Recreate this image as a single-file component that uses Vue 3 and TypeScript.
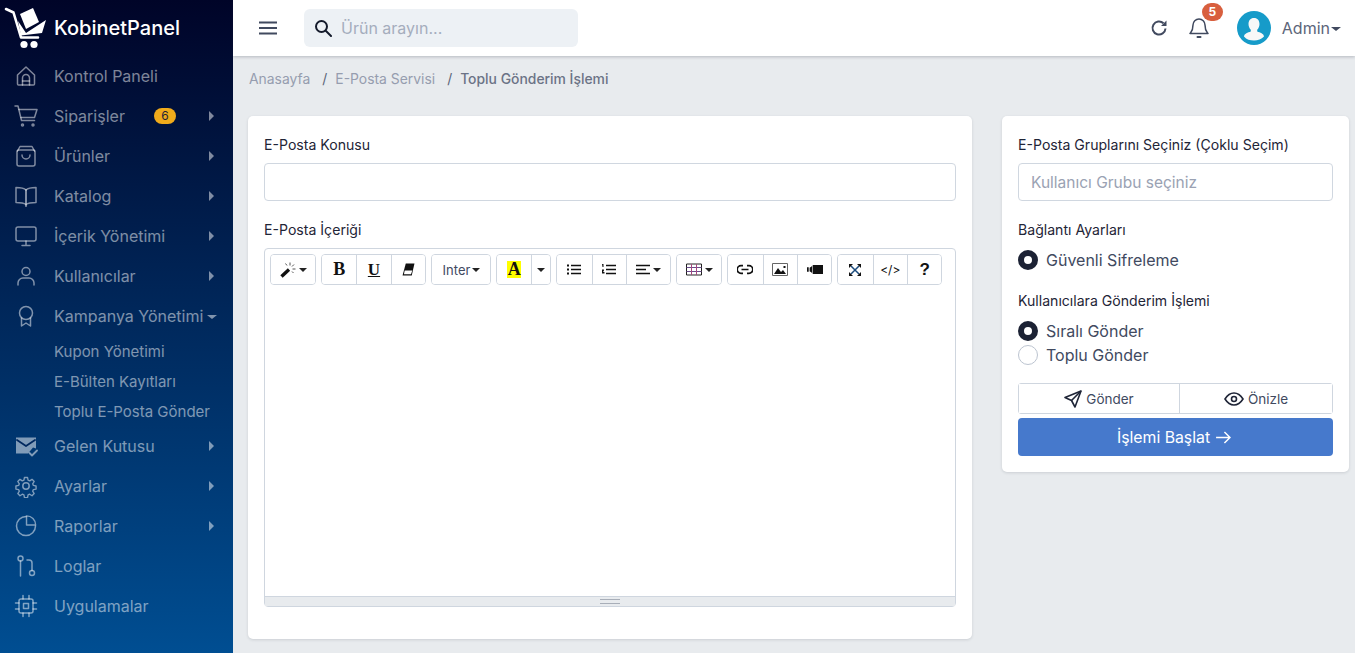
<script setup lang="ts">
interface MenuItem {
  label: string;
  icon: string;
  arrow?: boolean;
  badge?: string;
  open?: boolean;
  children?: string[];
}

const menu: MenuItem[] = [
  { label: "Kontrol Paneli", icon: "home" },
  { label: "Siparişler", icon: "cart", arrow: true, badge: "6" },
  { label: "Ürünler", icon: "bag", arrow: true },
  { label: "Katalog", icon: "book", arrow: true },
  { label: "İçerik Yönetimi", icon: "monitor", arrow: true },
  { label: "Kullanıcılar", icon: "user", arrow: true },
  {
    label: "Kampanya Yönetimi",
    icon: "award",
    open: true,
    children: ["Kupon Yönetimi", "E-Bülten Kayıtları", "Toplu E-Posta Gönder"],
  },
  { label: "Gelen Kutusu", icon: "mail", arrow: true },
  { label: "Ayarlar", icon: "gear", arrow: true },
  { label: "Raporlar", icon: "pie", arrow: true },
  { label: "Loglar", icon: "git" },
  { label: "Uygulamalar", icon: "cpu" },
];
</script>

<template>
  <div class="app">
    <aside class="sidebar">
      <div class="brand">
        <svg class="logo" viewBox="4 4 46 46" fill="#fff">
          <path d="M6 9 13.500 12.500 21 37.500H38" fill="none" stroke="#fff" stroke-width="2.600" stroke-linecap="round" stroke-linejoin="round" />
          <path d="M20 14 33 8 39 22 26 29z" />
          <path d="M18 21 26 33 46 20 42 33 21 35.500z" />
          <circle cx="24" cy="44.500" r="3.600" />
          <circle cx="34" cy="44.500" r="3.600" />
        </svg>
        <span class="brand-name">KobinetPanel</span>
      </div>
      <nav class="menu">
        <template v-for="item in menu" :key="item.label">
          <div class="menu-item">
            <svg class="menu-icon" viewBox="0 0 24 24" fill="none" stroke="currentColor" stroke-width="1.500" stroke-linecap="round" stroke-linejoin="round">
              <template v-if="item.icon === 'home'">
                <path d="M3.500 11 12 3l8.500 8v9a1 1 0 0 1-1 1h-15a1 1 0 0 1-1-1z" />
                <path d="M8.500 21v-7a3.500 3.500 0 0 1 7 0v7" />
                <path d="M8.500 17h7" />
              </template>
              <template v-else-if="item.icon === 'cart'">
                <path d="M1 2h3l3.500 14.500h13" />
                <path d="M5 5.500h18l-2.500 8H7" />
                <circle cx="8.500" cy="21" r="1" />
                <circle cx="19" cy="21" r="1" />
              </template>
              <template v-else-if="item.icon === 'bag'">
                <rect x="3" y="6" width="18" height="16" rx="2" />
                <path d="M3.500 7 6 2.500h12L20.500 7" />
                <path d="M8 11a4 4 0 0 0 8 0" />
              </template>
              <template v-else-if="item.icon === 'book'">
                <path d="M12 6C10 4 6 3.500 2 3.500v15c4 0 8 .5 10 2 2-1.500 6-2 10-2v-15c-4 0-8 .5-10 2.500z" />
                <path d="M12 6v16" stroke-width="2" />
              </template>
              <template v-else-if="item.icon === 'monitor'">
                <rect x="2" y="3" width="20" height="14" rx="2" />
                <path d="M12 17v4M8 21.500h8" />
              </template>
              <template v-else-if="item.icon === 'user'">
                <circle cx="12" cy="7.500" r="4" />
                <path d="M4 21v-2a5 5 0 0 1 5-5h6a5 5 0 0 1 5 5v2" />
              </template>
              <template v-else-if="item.icon === 'award'">
                <circle cx="12" cy="9" r="6.500" />
                <path d="M7.500 14v8l4.500-3 4.500 3v-8" />
              </template>
              <template v-else-if="item.icon === 'mail'">
                <path d="M2 3.500h20v11l-3-1-5 6H2z" fill="currentColor" stroke="none" />
                <path d="m3 6 9 6 9-6" stroke="#00285f" stroke-width="1.800" />
                <path d="m15.500 19 2.500 2.500 5-5" stroke-width="1.800" />
              </template>
              <template v-else-if="item.icon === 'gear'">
                <path d="M10.300 2.500h3.400l.6 3 1.800.8 2.600-1.700 2.400 2.400-1.700 2.600.8 1.800 3 .6v3.400l-3 .6-.8 1.800 1.700 2.600-2.400 2.400-2.600-1.700-1.800.8-.6 3h-3.400l-.6-3-1.800-.8-2.600 1.700-2.400-2.400 1.700-2.600-.8-1.800-3-.6v-3.400l3-.6.8-1.800-1.700-2.600 2.400-2.400 2.600 1.700 1.800-.8z" transform="translate(1.200 1.200) scale(.9)" />
                <circle cx="12" cy="12" r="3.200" />
              </template>
              <template v-else-if="item.icon === 'pie'">
                <path d="M12 2.500a9.500 9.500 0 1 0 9.500 9.500" />
                <path d="M12 2.500V12h9.500A9.500 9.500 0 0 0 12 2.500z" transform="translate(1 -0.500) scale(.96)" />
              </template>
              <template v-else-if="item.icon === 'git'">
                <circle cx="6.500" cy="4.500" r="2.500" />
                <path d="M6.500 7v15" />
                <circle cx="18" cy="19" r="2.500" />
                <path d="M18 16.500V9a3 3 0 0 0-3-3h-2" />
              </template>
              <template v-else>
                <rect x="5" y="5" width="14" height="14" rx="2" />
                <rect x="9.500" y="9.500" width="5" height="5" />
                <path d="M9 1.500V5M15 1.500V5M9 19v3.500M15 19v3.500M1.500 9H5M1.500 15H5M19 9h3.500M19 15h3.500" />
              </template>
            </svg>
            <span class="menu-label">{{ item.label }}</span>
            <span v-if="item.badge" class="menu-badge">{{ item.badge }}</span>
            <span v-if="item.arrow" class="arrow-right"></span>
            <span v-if="item.open" class="arrow-down"></span>
          </div>
          <div v-for="child in item.children" :key="child" class="sub-item">{{ child }}</div>
        </template>
      </nav>
    </aside>

    <div class="main">
      <header class="topbar">
        <svg class="burger" viewBox="0 0 18 14" fill="none" stroke="#414a5f" stroke-width="2">
          <path d="M0 1.500h18M0 7h18M0 12.500h18" />
        </svg>
        <div class="search">
          <svg class="search-icon" viewBox="0 0 18 18" fill="none" stroke="#141a2b" stroke-width="2" stroke-linecap="round">
            <circle cx="7.500" cy="7.500" r="5.500" />
            <path d="m12 12 5 5" />
          </svg>
          <span class="search-text">Ürün arayın...</span>
        </div>
        <div class="top-right">
          <svg class="refresh" viewBox="0 0 18 18" fill="none" stroke="#414a5f" stroke-width="2">
            <path d="M15.500 9.500A6.500 6.500 0 1 1 13.500 4.300" />
            <path d="M16.500 1.500v5.500H11z" fill="#414a5f" stroke="none" />
          </svg>
          <div class="bell-wrap">
            <svg class="bell" viewBox="0 0 20 22" fill="none" stroke="#414a5f" stroke-width="1.500" stroke-linecap="round" stroke-linejoin="round">
              <path d="M10 2a6 6 0 0 0-6 6c0 6-2 7-3 8.500h18C18 15 16 14 16 8a6 6 0 0 0-6-6z" />
              <path d="M8.500 20h3" stroke-width="2" />
            </svg>
            <span class="bell-badge">5</span>
          </div>
          <div class="avatar">
            <svg viewBox="0 0 34 34">
              <path d="M17 7c-3.600 0-5.500 2.600-5.500 6 0 2.500 1 4.500 2.300 5.700v1.800c-3 1.200-6.500 2-6.800 5C9.500 28.500 13 29.500 17 29.500s7.500-1 10-3.900c-.3-3-3.800-3.800-6.800-5v-1.800c1.300-1.200 2.300-3.200 2.300-5.700 0-3.400-1.900-6-5.500-6z" fill="#f8f8f8" />
            </svg>
          </div>
          <span class="admin">Admin</span>
          <span class="caret admin-caret"></span>
        </div>
      </header>

      <div class="crumbs">
        <span>Anasayfa</span>
        <span class="sep">/</span>
        <span>E-Posta Servisi</span>
        <span class="sep">/</span>
        <span class="current">Toplu Gönderim İşlemi</span>
      </div>

      <div class="content">
        <section class="card left-card">
          <label class="field-label">E-Posta Konusu</label>
          <div class="input"></div>
          <label class="field-label second">E-Posta İçeriği</label>
          <div class="editor">
            <div class="toolbar">
              <div class="group">
                <button class="tool w46">
                  <svg class="ico wand" viewBox="0 0 16 16">
                    <path d="M1.500 14.500 9 7.500" stroke="#111" stroke-width="3.400" fill="none" />
                    <path d="M10 .5v3M14 2.500l-2 2M15.500 7h-3M13.500 11l-1.500-1.500M5.500 1.500l1.500 2" stroke="#555" stroke-width="1" fill="none" />
                  </svg>
                  <span class="caret small"></span>
                </button>
              </div>
              <div class="group">
                <button class="tool w35 serif-b">B</button>
                <button class="tool w35 serif-u">U</button>
                <button class="tool w35">
                  <svg class="ico eraser" viewBox="0 0 12 12"><path d="M3.500 .5H11.500L9 11.500H.5z" fill="#111" /><path d="M2.500 7h7L8.300 10.300H1.800z" fill="#fff" /></svg>
                </button>
              </div>
              <div class="group">
                <button class="tool w60 font-btn">Inter<span class="caret small tight"></span></button>
              </div>
              <div class="group">
                <button class="tool w35"><span class="color-a">A</span></button>
                <button class="tool w20"><span class="caret small flush"></span></button>
              </div>
              <div class="group">
                <button class="tool w35">
                  <svg class="ico" viewBox="0 0 14 12" fill="#111"><path d="M0 1h2v2H0zM0 5h2v2H0zM0 9h2v2H0zM4 1.300h10v1.400H4zM4 5.300h10v1.400H4zM4 9.300h10v1.400H4z" /></svg>
                </button>
                <button class="tool w35">
                  <svg class="ico" viewBox="0 0 14 12" fill="#111"><path d="M0 .5h1.500v3H.5zM0 6h2v1l-1 1.500h1.500V10H0zM4 1.300h10v1.400H4zM4 5.300h10v1.400H4zM4 9.300h10v1.400H4z" /></svg>
                </button>
                <button class="tool w45">
                  <svg class="ico" viewBox="0 0 14 12" fill="#111"><path d="M0 1.300h14v1.400H0zM0 5.300h10v1.400H0zM0 9.300h14v1.400H0z" /></svg>
                  <span class="caret small"></span>
                </button>
              </div>
              <div class="group">
                <button class="tool w46">
                  <svg class="ico table" viewBox="0 0 16 12" fill="none" stroke="#222"><path d="M.5.500h15v11H.5z" /><path d="M.5 4h15M.5 8h15" stroke="#6a4b8c" /><path d="M5.500.500v11M10.500.500v11" stroke="#a5487c" /></svg>
                  <span class="caret small"></span>
                </button>
              </div>
              <div class="group">
                <button class="tool w35">
                  <svg class="ico wide" viewBox="0 0 16 10" fill="none" stroke="#111" stroke-width="1.700"><path d="M6 1.200H4a3.800 3.800 0 0 0 0 7.600h2M10 1.200h2a3.800 3.800 0 0 1 0 7.600h-2M4.500 5h7" /></svg>
                </button>
                <button class="tool w35">
                  <svg class="ico wide" viewBox="0 0 16 13"><path d="M.5.500h15v12H.5z" fill="#fff" stroke="#666" /><path d="M2 11 6 5l3 4 2-2 3 4z" fill="#111" /><path d="M11.500 3h2v2h-2z" fill="#111" /></svg>
                </button>
                <button class="tool w35">
                  <svg class="ico wide" viewBox="0 0 14 9" fill="#111"><path d="M5 .5h9v8H5zM0 2.500h1.500v4H0zM2.300 3 4.500 1.500v6L2.300 6z" /></svg>
                </button>
              </div>
              <div class="group">
                <button class="tool w35">
                  <svg class="ico exp" viewBox="0 0 12 12" fill="none" stroke="#1a4a7c" stroke-width="1.500"><path d="m2 2 8 8M10 2l-8 8" /><path d="M0 0h4L0 4zM12 0H8l4 4zM0 12h4L0 8zM12 12H8l4-4z" fill="#111" stroke="none" /></svg>
                </button>
                <button class="tool w35 code">&lt;/&gt;</button>
                <button class="tool w35 help">?</button>
              </div>
            </div>
            <div class="editor-body"></div>
            <div class="statusbar"><span class="grip"></span></div>
          </div>
        </section>

        <section class="card right-card">
          <label class="field-label">E-Posta Gruplarını Seçiniz (Çoklu Seçim)</label>
          <div class="input placeholder">Kullanıcı Grubu seçiniz</div>
          <label class="field-label second">Bağlantı Ayarları</label>
          <div class="radio-row"><span class="radio on"></span>Güvenli Sifreleme</div>
          <label class="field-label third">Kullanıcılara Gönderim İşlemi</label>
          <div class="radio-row first-radio"><span class="radio on"></span>Sıralı Gönder</div>
          <div class="radio-row"><span class="radio"></span>Toplu Gönder</div>
          <div class="btn-group">
            <button class="outline send">
              <svg viewBox="0 0 18 18" fill="none" stroke="#1f2537" stroke-width="1.600" stroke-linejoin="round"><path d="M17 1 1 7.500l6.500 3L11 17z" /><path d="M17 1 7.500 10.500" /></svg>
              Gönder
            </button>
            <button class="outline preview">
              <svg viewBox="0 0 20 14" fill="none" stroke="#1f2537" stroke-width="1.600"><path d="M1 7c2.500-4 5.500-6 9-6s6.500 2 9 6c-2.500 4-5.500 6-9 6s-6.500-2-9-6z" /><circle cx="10" cy="7" r="2.500" /></svg>
              Önizle
            </button>
          </div>
          <button class="start">
            İşlemi Başlat
            <svg viewBox="0 0 16 14" fill="none" stroke="#fff" stroke-width="1.600"><path d="M0 7h15M9 1l6 6-6 6" /></svg>
          </button>
        </section>
      </div>
    </div>
  </div>
</template>

<style>
html,
body {
  margin: 0;
  overflow: hidden;
}
</style>

<style scoped>
.app {
  display: flex;
  width: 1355px;
  height: 653px;
  overflow: hidden;
  font-family: Inter, "Noto Sans", sans-serif;
  background: #e8ebee;
  color: #1f2537;
}

.sidebar {
  width: 233px;
  flex-shrink: 0;
  background: linear-gradient(180deg, #000428 0%, #004e92 100%);
}

.brand {
  display: flex;
  align-items: center;
  height: 56px;
  padding-left: 4px;
}

.logo {
  width: 46px;
  height: 46px;
  margin-top: -2px;
}

.brand-name {
  margin-left: 4px;
  color: #fff;
  font-size: 20px;
  font-weight: 500;
}

.menu-item {
  position: relative;
  display: flex;
  align-items: center;
  height: 40px;
  padding-left: 14px;
  color: rgba(255, 255, 255, 0.5);
  font-size: 16px;
}

.menu-icon {
  width: 24px;
  height: 24px;
  margin-right: 16px;
  flex-shrink: 0;
}

.menu-badge {
  position: absolute;
  left: 154px;
  top: 12px;
  width: 22px;
  height: 16px;
  border-radius: 8px;
  background: #f0ab1b;
  color: #1f2537;
  font-size: 12px;
  line-height: 16px;
  text-align: center;
}

.arrow-right {
  position: absolute;
  left: 209px;
  top: 15px;
  border-left: 5px solid rgba(255, 255, 255, 0.5);
  border-top: 5px solid transparent;
  border-bottom: 5px solid transparent;
}

.arrow-down {
  margin-left: 4px;
  margin-top: 1px;
  border-top: 4px solid rgba(255, 255, 255, 0.5);
  border-left: 5px solid transparent;
  border-right: 5px solid transparent;
}

.sub-item {
  height: 30px;
  padding-left: 54px;
  color: rgba(255, 255, 255, 0.5);
  font-size: 15px;
  line-height: 31px;
}

.main {
  flex: 1;
  min-width: 0;
}

.topbar {
  display: flex;
  align-items: center;
  height: 56px;
  padding-left: 26px;
  background: #fff;
  box-shadow: 0 1px 3px rgba(30, 40, 60, 0.25);
}

.burger {
  width: 18px;
  height: 14px;
}

.search {
  display: flex;
  align-items: center;
  width: 274px;
  height: 38px;
  margin-left: 27px;
  padding-left: 10px;
  box-sizing: border-box;
  border-radius: 6px;
  background: #edf1f5;
}

.search-icon {
  width: 18px;
  height: 18px;
  margin-right: 9px;
}

.search-text {
  color: #a5adbd;
  font-size: 16px;
}

.top-right {
  display: flex;
  align-items: center;
  margin-left: auto;
  padding-right: 14px;
}

.refresh {
  width: 18px;
  height: 18px;
}

.bell-wrap {
  position: relative;
  width: 20px;
  height: 22px;
  margin-left: 21px;
}

.bell {
  width: 20px;
  height: 22px;
}

.bell-badge {
  position: absolute;
  left: 13px;
  top: -14px;
  width: 21px;
  height: 18px;
  border-radius: 9px;
  background: #d85f3e;
  color: #fff;
  font-size: 12px;
  font-weight: 700;
  line-height: 18px;
  text-align: center;
}

.avatar {
  width: 34px;
  height: 34px;
  margin-left: 28px;
  border-radius: 50%;
  background: #169bc9;
  overflow: hidden;
}

.avatar svg {
  display: block;
  width: 34px;
  height: 34px;
}

.admin {
  margin-left: 11px;
  color: #5c6579;
  font-size: 16px;
}

.caret {
  display: inline-block;
  border-top: 4px solid #414a5f;
  border-left: 5px solid transparent;
  border-right: 5px solid transparent;
}

.admin-caret {
  margin-top: 1px;
  margin-left: 1px;
}

.caret.small {
  margin-left: 3px;
  border-top-color: #222;
  border-top-width: 4px;
  border-left-width: 4.500px;
  border-right-width: 4.500px;
}

.caret.small.tight {
  margin-left: 2px;
}

.caret.small.flush {
  margin-left: 0;
}

.crumbs {
  display: flex;
  align-items: center;
  height: 45px;
  padding-left: 16px;
  color: #969daf;
  font-size: 13.900px;
}

.sep {
  margin: 0 8px 0 12px;
  color: #5c6579;
}

.current {
  color: #6b7386;
  font-weight: 500;
}

.content {
  display: flex;
  align-items: flex-start;
  padding: 15px 6px 0 15px;
}

.card {
  padding: 16px;
  box-sizing: border-box;
  border-radius: 5px;
  background: #fff;
  box-shadow: 0 1px 3px rgba(30, 40, 60, 0.14);
}

.left-card {
  width: 724px;
  height: 523px;
}

.right-card {
  width: 347px;
  height: 356px;
  margin-left: 30px;
}

.field-label {
  display: block;
  height: 17px;
  margin-top: 4px;
  margin-bottom: 10px;
  color: #1f2537;
  font-size: 14.100px;
  line-height: 17px;
}

.field-label.second {
  margin-top: 20px;
}

.field-label.third {
  margin-top: 20px;
}

.input {
  height: 38px;
  box-sizing: border-box;
  border: 1px solid #d0d7e0;
  border-radius: 4px;
  background: #fff;
}

.placeholder {
  padding-left: 12px;
  color: #9aa2b3;
  font-size: 15.500px;
  line-height: 38px;
}

.editor {
  display: flex;
  flex-direction: column;
  height: 359px;
  box-sizing: border-box;
  border: 1px solid #cfd6df;
  border-radius: 4px;
}

.toolbar {
  display: flex;
  gap: 5px;
  padding: 5px 0 0 5px;
}

.group {
  display: flex;
  height: 31px;
  box-sizing: border-box;
  border: 1px solid #cfd6df;
  border-radius: 4px;
  overflow: hidden;
}

.tool {
  display: flex;
  align-items: center;
  justify-content: center;
  height: 100%;
  padding: 0;
  box-sizing: border-box;
  border: none;
  border-left: 1px solid #cfd6df;
  background: #fff;
  color: #111;
}

.tool:first-child {
  border-left: none;
}

.w20 { width: 19px; }
.w35 { width: 34.330px; }
.w45 { width: 44.330px; }
.w46 { width: 44px; }
.w60 { width: 58px; }

.ico {
  width: 14px;
  height: 13px;
}

.ico.wand {
  width: 16px;
  height: 16px;
}

.ico.table {
  width: 16px;
}

.ico.wide {
  width: 16px;
}

.ico.eraser {
  width: 13px;
  height: 13px;
}

.ico.exp {
  width: 12px;
  height: 12px;
}

.serif-b,
.serif-u {
  font-family: "Liberation Serif", serif;
  font-size: 18px;
  font-weight: 700;
}

.serif-u {
  font-size: 17px;
  text-decoration: underline;
}

.font-btn {
  padding-left: 1px;
  color: #414a5f;
  font-family: Inter, sans-serif;
  font-size: 13px;
}

.color-a {
  width: 14px;
  height: 17px;
  background: #ff0;
  color: #111;
  font-family: "Liberation Serif", serif;
  font-size: 18px;
  font-weight: 700;
  line-height: 17px;
  text-align: center;
}

.code {
  font-family: Inter, sans-serif;
  font-size: 12px;
}

.help {
  font-family: "Liberation Sans", sans-serif;
  font-size: 17px;
  font-weight: 700;
}

.editor-body {
  flex: 1;
}

.statusbar {
  display: flex;
  align-items: center;
  justify-content: center;
  height: 9px;
  background: #e8ebee;
  border-top: 1px solid #cfd6df;
}

.grip {
  width: 20px;
  height: 5px;
  border-top: 1px solid #a8aeb8;
  border-bottom: 1px solid #a8aeb8;
  box-sizing: border-box;
}

.radio-row {
  display: flex;
  align-items: center;
  height: 24px;
  color: #414a5f;
  font-size: 16px;
}

.first-radio {
  margin-top: 8px;
}

.radio {
  width: 20px;
  height: 20px;
  margin-right: 8px;
  box-sizing: border-box;
  border: 1px solid #bcc4d0;
  border-radius: 50%;
  background: #fff;
}

.radio.on {
  border: 6px solid #1c2234;
}

.btn-group {
  display: flex;
  height: 31px;
  margin-top: 16px;
  box-sizing: border-box;
  border: 1px solid #cfd6df;
  border-radius: 3px;
}

.outline {
  display: flex;
  align-items: center;
  justify-content: center;
  gap: 4px;
  padding: 0;
  border: none;
  background: #fff;
  color: #414a5f;
  font-family: Inter, sans-serif;
  font-size: 13.500px;
}

.send {
  width: 161px;
  border-right: 1px solid #cfd6df;
}

.send svg {
  width: 18px;
  height: 18px;
}

.preview {
  flex: 1;
}

.preview svg {
  width: 20px;
  height: 14px;
}

.start {
  display: flex;
  align-items: center;
  justify-content: center;
  gap: 6px;
  width: 100%;
  height: 38px;
  margin-top: 4px;
  padding: 0 3px 0 0;
  border: none;
  border-radius: 4px;
  background: #4679cc;
  color: #fff;
  font-family: Inter, sans-serif;
  font-size: 15.800px;
}

.start svg {
  width: 15px;
  height: 13px;
}
</style>
